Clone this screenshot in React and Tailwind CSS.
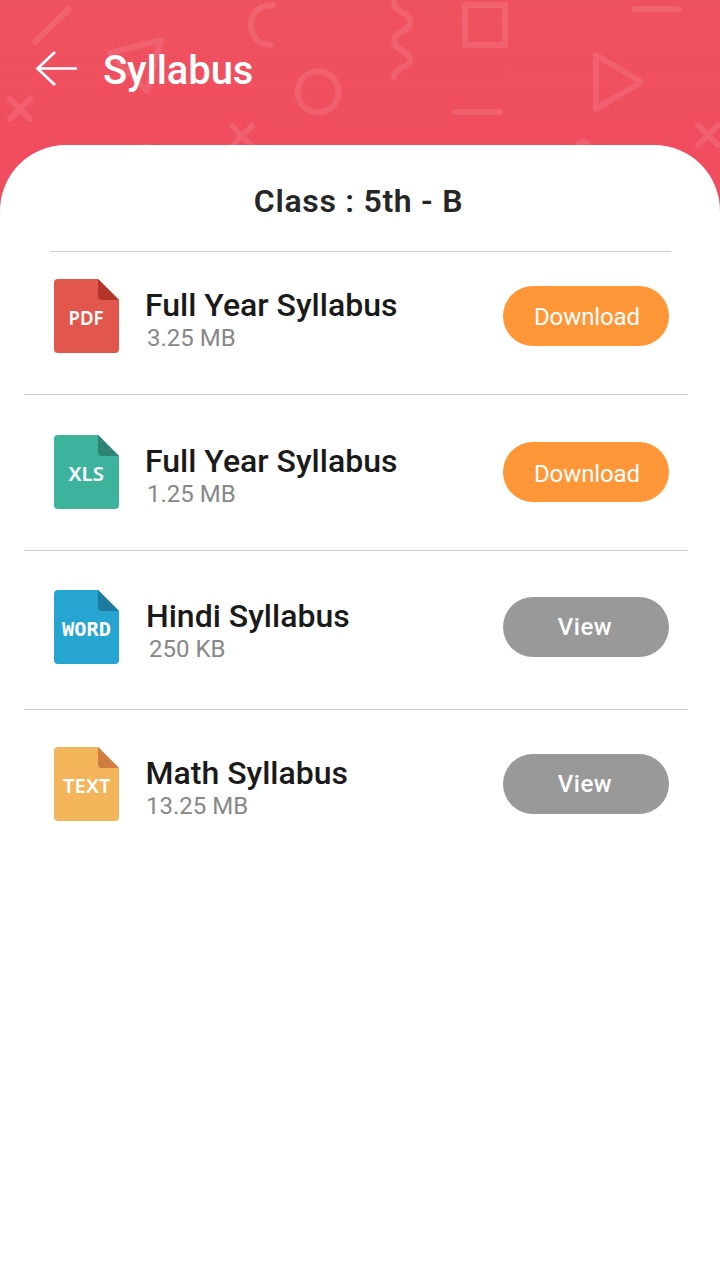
import React from 'react';

// Files listed under the class heading
const files = [
  {
    id: 1,
    type: 'PDF',
    color: '#e2574c',
    fold: '#b53629',
    labelX: 14.5,
    labelWidth: 35,
    labelFont: "'Noto Sans', sans-serif",
    labelWeight: 600,
    title: 'Full Year Syllabus',
    size: '3.25 MB',
    action: 'Download',
    rowClass: 'h-[143px] pt-[27px] border-b',
    titleClass: 'ml-[26px]',
    sizeClass: 'ml-[28px]',
    buttonClass: 'pt-0.5',
  },
  {
    id: 2,
    type: 'XLS',
    color: '#3db39e',
    fold: '#2d8474',
    labelX: 14.5,
    labelWidth: 35.5,
    labelFont: "'Noto Sans', sans-serif",
    labelWeight: 600,
    title: 'Full Year Syllabus',
    size: '1.25 MB',
    action: 'Download',
    rowClass: 'h-[156px] pt-10 border-b',
    titleClass: 'ml-[26px]',
    sizeClass: 'ml-[28px]',
    buttonClass: 'pt-1',
  },
  {
    id: 3,
    type: 'WORD',
    color: '#27a5d1',
    fold: '#1f7b9d',
    labelX: 8,
    labelWidth: 49,
    labelFont: "'DejaVu Sans Mono', monospace",
    labelWeight: 700,
    title: 'Hindi Syllabus',
    size: '250 KB',
    action: 'View',
    rowClass: 'h-[159px] pt-[39px] border-b',
    titleClass: 'ml-[27px]',
    sizeClass: 'ml-[30px]',
    buttonClass: '',
  },
  {
    id: 4,
    type: 'TEXT',
    color: '#f3b45a',
    fold: '#d07c40',
    labelX: 9,
    labelWidth: 47.5,
    labelFont: "'Noto Sans', sans-serif",
    labelWeight: 600,
    title: 'Math Syllabus',
    size: '13.25 MB',
    action: 'View',
    rowClass: 'h-[156px] pt-[37px]',
    titleClass: 'ml-[26.500px]',
    sizeClass: 'ml-[27px]',
    buttonClass: '',
  },
];

// Faint shapes behind the header
const HeaderPattern = () => (
  <svg
    className="absolute inset-0"
    width="720"
    height="215"
    fill="none"
    stroke="#ffffff"
    strokeOpacity="0.1"
    strokeWidth="6"
    strokeLinecap="round"
    strokeLinejoin="round"
  >
    <path d="M35 42 69 9" />
    <path d="M110 53 161 40 147 91Z" />
    <path d="m10 99 20 20M30 99l-20 20" />
    <path d="m232 126 20 20M252 126l-20 20" />
    <path d="M273 5C258 5 251 14 251 25s7 20 20 20" />
    <circle cx="318" cy="92" r="20.500" />
    <path d="M394 2C394 13 410 12 410 22C410 32 394 31 394 41C394 51 410 50 410 60C410 68 394 67 394 77" />
    <rect x="465" y="5" width="40" height="40" />
    <path d="M455 112h45M634 9h45" />
    <path d="m596 55 45 27-45 27Z" />
    <path d="m698 125 20 20M718 125l-20 20" />
    <circle cx="583" cy="148" r="6" />
    <path d="M144 147h4" />
  </svg>
);

const FileIcon = ({ file }) => (
  <svg width="65" height="74" viewBox="0 0 65 74" className="shrink-0">
    <path d="M4 0H44L65 21V70Q65 74 61 74H4Q0 74 0 70V4Q0 0 4 0Z" fill={file.color} />
    <path d="M44 0 65 21H48Q44 21 44 17Z" fill={file.fold} />
    <text
      x={file.labelX}
      y="45.800"
      textLength={file.labelWidth}
      lengthAdjust="spacingAndGlyphs"
      fill="#ffffff"
      fontFamily={file.labelFont}
      fontSize="19"
      fontWeight={file.labelWeight}
    >
      {file.type}
    </text>
  </svg>
);

const ActionButton = ({ action, className }) => (
  <button
    className={`mt-[7px] ml-auto h-[60px] w-[166px] rounded-full text-2xl text-white ${
      action === 'Download'
        ? 'bg-[#ff9738] pl-[2px] tracking-[-0.100px]'
        : 'bg-[#999999] pr-[2px] font-medium tracking-[0.500px]'
    } ${className}`}
  >
    {action}
  </button>
);

const FileRow = ({ file }) => (
  <li className={`flex items-start border-[#cccccc] pr-[19px] pl-[30px] ${file.rowClass}`}>
    <FileIcon file={file} />
    <div className="pt-[7px]">
      <h3 className={`text-[32px] leading-[38px] font-medium text-[#1a1a1a] ${file.titleClass}`}>
        {file.title}
      </h3>
      <p className={`text-2xl leading-7 text-[#888888] ${file.sizeClass}`}>{file.size}</p>
    </div>
    <ActionButton action={file.action} className={file.buttonClass} />
  </li>
);

const App = () => {
  return (
    <div className="relative flex h-[1280px] w-[720px] flex-col overflow-hidden bg-linear-to-b from-[#ef525f] to-[#f04b60] to-[215px] font-['Roboto',sans-serif]">
      <HeaderPattern />

      {/* Header */}
      <header className="relative flex h-[145px] shrink-0 items-start pl-[35px]">
        <button aria-label="Back" className="mt-[50px]">
          <svg width="43" height="37" fill="none" stroke="#ffffff" strokeWidth="2.700">
            <path d="M42 18.500H3M20 2 2.500 18.500 20 35" />
          </svg>
        </button>
        <h1 className="mt-[47px] ml-[25px] text-[40px] leading-[48px] font-medium tracking-[-0.100px] text-white">
          Syllabus
        </h1>
      </header>

      {/* Syllabus list */}
      <main className="relative grow rounded-t-[66px] bg-white">
        <h2 className="mr-[49px] ml-[50px] h-[107px] border-b border-[#cccccc] pt-[37px] pr-1 text-center text-[32px] leading-[38px] font-semibold tracking-[0.700px] text-[#262626]">
          Class : 5th - B
        </h2>
        <ul className="mr-8 ml-6">
          {files.map((file) => (
            <FileRow key={file.id} file={file} />
          ))}
        </ul>
      </main>
    </div>
  );
};

export default App;
